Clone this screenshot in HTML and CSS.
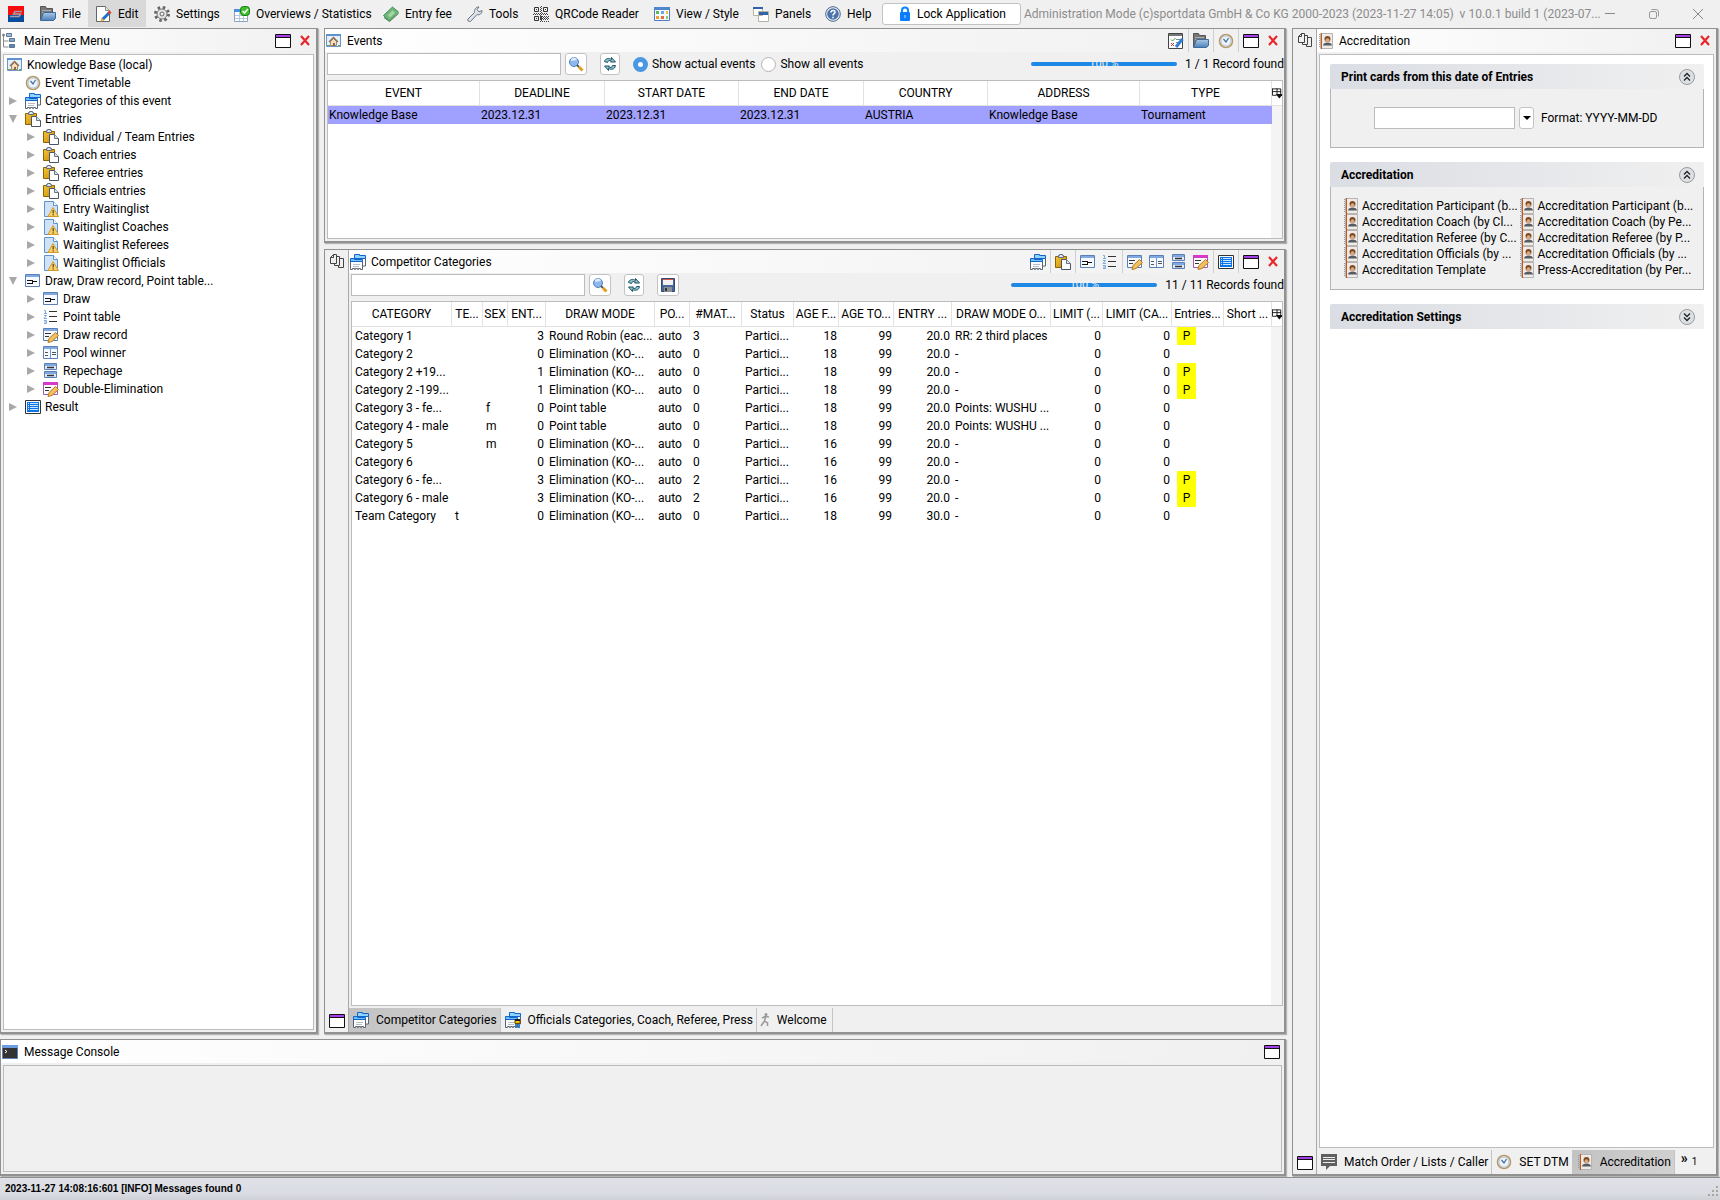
FILE: index.html
```html
<!DOCTYPE html>
<html lang="en">
<head>
    <meta charset="UTF-8">
    <meta name="viewport" content="width=device-width, initial-scale=1.0">
    <title>Administration Mode</title>
    <link rel="stylesheet" href="styles.css">
</head>
<body>
    <svg class="defs" aria-hidden="true">
        <linearGradient id="blue" x1="0" y1="0" x2="0" y2="1"><stop offset="0" stop-color="#a9c8e8"/><stop offset="1" stop-color="#4c7fb8"/></linearGradient>
        <linearGradient id="gold" x1="0" y1="0" x2="1" y2="1"><stop offset="0" stop-color="#f5c53a"/><stop offset="1" stop-color="#c98a00"/></linearGradient>
        <symbol id="i-logo" viewBox="0 0 16 16"><path fill="#f50d0d" d="M0 0h16v9H0z"/><path fill="#0a4c9c" d="M0 9h16v7H0z"/><path fill="none" stroke="#a89aa4" stroke-width="1.500" d="M14 5.500H7L5.500 8h7L11 10.500H2"/></symbol>
        <symbol id="i-folder" viewBox="0 0 16 16"><path fill="#777" stroke="#555" d="M.5 14V.5h5l1 2h6V8"/><path stroke="#aaa" d="M2 4.500h9M2 6.500h9"/><path fill="url(#blue)" stroke="#3d6a9c" d="M.5 14.500l3-8h12v6l-2 2z"/></symbol>
        <symbol id="i-edit" viewBox="0 0 16 16"><path fill="#fff" stroke="#666" d="M.5.500h9l4 4v11H.5z"/><path fill="#e8e8e8" stroke="#888" d="M9.500.500v4h4"/><path stroke="#1f6fd0" stroke-width="3" d="M6.500 13.500l7-7"/><path stroke="#e23c2e" stroke-width="3" d="M12.500 7.500l2-2"/><path fill="#f0b040" d="M4.500 15.500l1-4 3 3z"/></symbol>
        <symbol id="i-gear" viewBox="0 0 16 16"><circle cx="8" cy="8" r="6.500" fill="none" stroke="#666" stroke-width="3" stroke-dasharray="2.500 2.600"/><circle cx="8" cy="8" r="5" fill="#e4e7ea" stroke="#777"/><circle cx="8" cy="8" r="2" fill="#f0f0f0" stroke="#666"/></symbol>
        <symbol id="i-stats" viewBox="0 0 16 16"><path fill="#fff" stroke="#8aa4c4" d="M.5 3.500h13v12H.5z"/><path fill="#4a90e2" d="M0 3h9v3H0z"/><path stroke="#b4c8de" d="M1 9.500h12M1 12.500h12M5.500 6v9M9.500 6v9"/><rect x="6.500" y=".5" width="9" height="9" rx="3" fill="#3fbf2e" stroke="#157a12"/><path fill="none" stroke="#fff" stroke-width="1.500" d="M8.500 5l2 2 3.500-4"/></symbol>
        <symbol id="i-money" viewBox="0 0 16 16"><path fill="#6fb878" stroke="#4a8c55" d="M.5 9.500L9.500 1l6 5-9 9z"/><path fill="#a5d6a7" d="M5 9l4.500-4.500L12 7l-5 4.500z"/><path fill="none" stroke="#3f7d4a" d="M1 11.500l5.500 4 9-8"/></symbol>
        <symbol id="i-wrench" viewBox="0 0 16 16"><path fill="#dfe4ea" stroke="#6a7480" d="M1 13l6.500-6.500C7 3.500 9 .8 12 1l-2 2.500 2 2.500 3-1.500c.3 3-2.500 5-5 4L3.500 15.500C1.500 16 .2 14.500 1 13z"/></symbol>
        <symbol id="i-qr" viewBox="0 0 16 16"><path fill="none" stroke="#333" d="M1.500 1.500h4v4h-4zM10.500 1.500h4v4h-4zM1.500 10.500h4v4h-4z"/><path stroke="#444" stroke-dasharray="1 1" d="M7.500 1v14M8.500 0v16M1 7.500h14M0 8.500h16M7 10.500h9M8 11.500h8M7 12.500h9M8 13.500h8M7 15.500h9"/><path fill="#333" d="M3 3h1v1H3zM12 3h1v1h-1zM3 12h1v1H3z"/></symbol>
        <symbol id="i-view" viewBox="0 0 16 16"><path fill="#f6faff" stroke="#4f7fc0" d="M.5 1.500h15v13H.5z"/><path fill="#4f86cf" d="M0 1h16v3H0z"/><path fill="#5db85d" d="M2 5h3v3H2z"/><path fill="#6aa7e8" d="M7 5h3v3H7z"/><path fill="#e8c53a" d="M12 5h2v3h-2z"/><path fill="#f0a030" d="M2 10h3v3H2z"/><path fill="#e86a3a" d="M7 10h3v3H7z"/><path fill="#8cc870" d="M12 10h2v3h-2z"/></symbol>
        <symbol id="i-panels" viewBox="0 0 16 16"><path fill="#fff" stroke="#b4b4a4" d="M.5 1.500h9v8h-9zM5.500 5.500h10v10h-10z"/><path fill="#2f62a6" d="M0 1h10v2H0zM6 6h9v3H6z"/></symbol>
        <symbol id="i-help" viewBox="0 0 16 16"><circle cx="8" cy="8" r="7.300" fill="#eef3f8" stroke="#4a6384"/><circle cx="8" cy="8" r="5.800" fill="#4b74ab"/><path fill="none" stroke="#fff" stroke-width="1.600" d="M6 6.500C6 3.500 10.500 4 10 6.500 9.800 7.800 8 7.800 8 9.500M8 10.800v1.400"/></symbol>
        <symbol id="i-lock" viewBox="0 0 16 16"><path fill="none" stroke="#0a84ff" stroke-width="2" d="M5 7V4.500a3 3 0 0 1 6 0V7"/><rect x="3" y="6" width="10" height="9" rx="1" fill="#0a7cff"/><path stroke="#7fc0ff" stroke-width="1.500" d="M8 9v3"/></symbol>
        <symbol id="i-tree" viewBox="0 0 16 16"><path fill="none" stroke="#888" d="M1.500 2v12h5M1.500 8h5M4.500 2.500h3"/><circle cx="1.500" cy="2" r="1.500" fill="#888"/><path fill="url(#blue)" stroke="#5c7894" d="M4.500.500h5v3h-5zM7.500 5.500h5v3h-5zM7.500 11.500h5v3h-5z"/></symbol>
        <symbol id="i-home" viewBox="0 0 16 16"><path fill="#e6f0fa" stroke="#6a96c4" d="M.5 1.500h14v12H.5z"/><path fill="#5f93cf" d="M0 1h15v2H0z"/><path fill="#f1dfc0" stroke="#a58a6a" d="M4.500 8.500v4h6v-4l-3-3z"/><path fill="none" stroke="#8f6a50" stroke-width="1.300" d="M3 9l4.500-4.500L12 9"/><path fill="#8a6a4a" d="M7 10h2v3H7z"/><path stroke="#6aa84f" d="M1 12.500h3M12 12.500h2"/></symbol>
        <symbol id="i-clock" viewBox="0 0 16 16"><circle cx="8" cy="8" r="6.500" fill="#eef4fb" stroke="#b89a68" stroke-width="1.600"/><circle cx="8" cy="8" r="5" fill="none" stroke="#b5c6da"/><path fill="none" stroke="#4a6fa0" stroke-width="1.300" d="M5.500 6L8 9l2.500-4"/></symbol>
        <symbol id="i-cats" viewBox="0 0 16 16"><path fill="#fff" stroke="#5c6470" d="M4.500 4v8h11V4z"/><path fill="#8fd4ff" stroke="#1565c8" d="M4.500 4.500v-4h5v1h6v3z"/><path fill="#fbfcfd" stroke="#5c6470" d="M.5 7v8.500h2v-1h2v1h1v-1h2v1h1v-1h2v1h2V7z"/><path fill="#6cc2ff" stroke="#1565c8" d="M.5 7.500v-3h4v1h8v2z"/><path stroke="#b8bcc4" d="M3 10.500h7M3 12.500h6"/></symbol>
        <symbol id="i-official" viewBox="0 0 16 16"><use href="#i-cats"/><path fill="#f5c400" stroke="#6a4a00" d="M10 7.500h5v4h-5z"/><path fill="#222" d="M10 7h5v2h-5z"/><path fill="#2f7fd0" d="M10 12h2v4h-2zM13 12h2v4h-2z"/></symbol>
        <symbol id="i-paste" viewBox="0 0 16 16"><path fill="url(#gold)" stroke="#8a6400" d="M.5 2.500h11v11H.5z"/><path fill="#dfe6ee" stroke="#5c6c80" d="M3.500 3.500v-2h1v-1h3v1h1v2z"/><path fill="#fff" stroke="#4a5464" d="M6.500 5.500h5l4 4v6h-9z"/><path fill="#d8e0ea" stroke="#6a7484" d="M11.500 5.500v4h4"/></symbol>
        <symbol id="i-wait" viewBox="0 0 16 16"><path fill="#cfe2f6" stroke="#5d94cc" d="M1.500.500h9l4 4v11h-13z"/><path fill="#fff" stroke="#5d94cc" d="M10.500.500v4h4"/><path fill="#f7d269" stroke="#d29a2a" d="M5 15.500L10 6.500l5.500 9z"/><path stroke="#6a4a10" stroke-width="1.300" d="M10.200 9v3.500M10.200 13.300v1.200"/></symbol>
        <symbol id="i-draw" viewBox="0 0 16 16"><path fill="#f6faff" stroke="#5b80b8" d="M.5 1.500h14v12H.5z"/><path fill="#7fa9e0" d="M1 2h13v2H1z"/><path fill="none" stroke="#111" d="M2 7.500h5M2 10.500h5M8 8.500h4M7.500 7v4"/></symbol>
        <symbol id="i-points" viewBox="0 0 16 16"><path stroke="#333" d="M6 2.500h8M6 7.500h8M6 12.500h8"/><path fill="none" stroke="#7eaadf" d="M1 1.500h1.500V4M1 4.500h3M1 6.500h2.500L1 9.500h3M1 11.500h2.500v3H1M1 13h2"/></symbol>
        <symbol id="i-record" viewBox="0 0 16 16"><path fill="#f6faff" stroke="#5b80b8" d="M.5 1.500h14v12H.5z"/><path fill="#7fa9e0" d="M1 2h13v2H1z"/><path stroke="#333" d="M2 6.500h6M2 9.500h4"/><path fill="#f2c060" stroke="#b47a20" d="M5 15.500l1-4 6.500-6 3 3-6.500 6z"/></symbol>
        <symbol id="i-pool" viewBox="0 0 16 16"><path fill="#f6faff" stroke="#5b80b8" d="M.5 1.500h14v12H.5z"/><path fill="#7fa9e0" d="M1 2h13v2H1z"/><path stroke="#6b98d8" d="M7.500 4v9"/><path stroke="#555" d="M2 7.500h3M2 10.500h3M9 7.500h4M9 9.500h4"/></symbol>
        <symbol id="i-repechage" viewBox="0 0 16 16"><path fill="#dce9f8" stroke="#5b80b8" d="M1.500.500h12v6h-12zM1.500 8.500h12v6h-12z"/><path fill="#7fa9e0" d="M2 1h11v2H2zM2 9h11v2H2z"/><path stroke="#333" stroke-width="1.500" d="M4 4.500h7M4 12.500h7"/></symbol>
        <symbol id="i-double" viewBox="0 0 16 16"><path fill="#fff" stroke="#a05ab4" d="M.5 1.500h14v12H.5z"/><path fill="#d63ac8" d="M0 1h15v3H0z"/><path stroke="#333" d="M2 6.500h6M2 9.500h4"/><path fill="#f2c060" stroke="#b47a20" d="M5 15.500l1-4 6.500-6 3 3-6.500 6z"/></symbol>
        <symbol id="i-result" viewBox="0 0 16 16"><path fill="#fff" stroke="#333" d="M.5 1.500h15v13H.5z"/><path fill="#0a74e8" d="M2 3h12v10H2z"/><path stroke="#cfe6ff" d="M5 4.500h8M5 6.500h8M5 8.500h8M5 10.500h8"/><path stroke="#cfe6ff" stroke-dasharray="1 1" d="M3.500 4v8"/></symbol>
        <symbol id="i-window" viewBox="0 0 16 16"><path fill="#fff" stroke="#111" d="M.5 1.500h15v13H.5z"/><path fill="#a540e8" d="M1 2h14v2H1z"/><path stroke="#111" d="M1 4.500h14"/></symbol>
        <symbol id="i-close" viewBox="0 0 16 16"><path stroke="#e8272b" stroke-width="2.200" d="M4 3l8 9M12 3l-8 9"/></symbol>
        <symbol id="i-search" viewBox="0 0 16 16"><circle cx="6" cy="6" r="4.500" fill="#8cb8ee" stroke="#5580c0"/><path fill="#dcebfc" d="M3 5a3 3 0 0 1 6-1z"/><path stroke="#555" stroke-width="2" d="M9 9l2 2"/><path stroke="#e0a020" stroke-width="3" d="M11 11l3.500 3.500"/></symbol>
        <symbol id="i-refresh" viewBox="0 0 16 16"><path fill="#8fc4cc" stroke="#1f5468" d="M2.500 5.500C3 2.500 7 1.500 9.500 3.500V1.500l4 4.500H8.500l1-1C8 4 5.500 4.500 5.500 6.500z"/><path fill="#8fc4cc" stroke="#1f5468" d="M13.500 9.500c-.5 4-4.500 4.500-7 3v2l-4-4.500h5l-1 1c1.500 1 4 .5 4-1.500z"/></symbol>
        <symbol id="i-save" viewBox="0 0 16 16"><path fill="#46669c" stroke="#34496e" d="M1.500 1.500h13v13h-13z"/><path fill="#f5f0f0" d="M3 2h10v6H3z"/><path fill="#d9534f" d="M3 2h10v1H3z"/><path fill="#8a8f98" d="M4 10h8v5H4z"/><path fill="#333" d="M5 11h2v3H5z"/></symbol>
        <symbol id="i-form" viewBox="0 0 16 16"><path fill="#fff" stroke="#444" d="M.5.500h14v15H.5z"/><path fill="#777" d="M1 1h13v2H1z"/><path fill="none" stroke="#3a9a4a" d="M3 6.500l1.500 1.500 3-3"/><path stroke="#c33" d="M3 10l3 3M6 10l-3 3"/><path stroke="#888" d="M8 6.500h5M8 9.500h3"/><path stroke="#2f7fd8" stroke-width="3" d="M8 14l6.500-8"/></symbol>
        <symbol id="i-card" viewBox="0 0 16 16"><path fill="#f0ebe6" stroke="#b4b4b4" d="M2.500.500h12v15h-12z"/><path stroke="#c8581c" d="M3.500 0v16"/><path stroke="#999" stroke-dasharray="1 1" d="M1.500 1v14"/><path fill="#555c66" d="M5 12.500c0-4 9-4 9 0z"/><circle cx="9.500" cy="6" r="3" fill="#7a4a20"/><circle cx="9.500" cy="7.200" r="2" fill="#d9a880"/></symbol>
        <symbol id="i-stack" viewBox="0 0 16 16"><path fill="none" stroke="#444" d="M4.500 1.500h3v9h-6v-6zM4.500 1.500v3h-3M8 3.500h2.500v9h-5V11M11 5.500h3.500v9h-5V13"/></symbol>
        <symbol id="i-column" viewBox="0 0 12 12"><path fill="none" stroke="#111" d="M.5 1.500h9v6M.5 1v7.500H5M0 4.500h10M5.500 1v7"/><path fill="#111" d="M4 7h8l-4 5z"/></symbol>
        <symbol id="i-runner" viewBox="0 0 16 16"><circle cx="8" cy="2.500" r="1.500" fill="#999"/><path fill="none" stroke="#999" stroke-width="1.500" d="M11 5L7 4.500 4 6M7.500 5L6.500 9l3 2v3M6.500 9L3 14"/></symbol>
        <symbol id="i-console" viewBox="0 0 16 16"><path fill="#333" stroke="#5d7fb4" d="M.5 1.500h15v13H.5z"/><path fill="#6d9be0" d="M0 1h16v3H0z"/><path fill="none" stroke="#fff" d="M3 6l2 1.500L3 9"/></symbol>
        <symbol id="i-chat" viewBox="0 0 16 16"><path fill="#606060" d="M0 0h16v12H9l-4 4v-4H0z"/><path stroke="#eee" d="M2 3.500h12M2 5.500h12M2 8.500h12"/></symbol>
        <symbol id="i-up" viewBox="0 0 16 16"><circle cx="8" cy="8" r="7.500" fill="#dcdfe4" stroke="#9a9a9a"/><path fill="none" stroke="#222" stroke-width="1.300" d="M5 7.500l3-3 3 3M5 11.500l3-3 3 3"/></symbol>
        <symbol id="i-down" viewBox="0 0 16 16"><circle cx="8" cy="8" r="7.500" fill="#dcdfe4" stroke="#9a9a9a"/><path fill="none" stroke="#222" stroke-width="1.300" d="M5 4.500l3 3 3-3M5 8.500l3 3 3-3"/></symbol>
        <symbol id="i-min" viewBox="0 0 16 16"><path stroke="#888" d="M3 7.500h10"/></symbol>
        <symbol id="i-restore" viewBox="0 0 16 16"><rect x="3.500" y="5.500" width="7" height="7" rx="1.500" fill="none" stroke="#999"/><path fill="none" stroke="#999" d="M5.500 3.500H10a2.500 2.500 0 0 1 2.500 2.500v4.500"/></symbol>
        <symbol id="i-exit" viewBox="0 0 16 16"><path stroke="#888" d="M3 3l10 10M13 3L3 13"/></symbol>
    </svg>

    <header class="menubar">
        <svg class="icon logo"><use href="#i-logo"/></svg>
        <nav class="menu">
            <button><svg class="icon"><use href="#i-folder"/></svg>File</button>
            <button class="active"><svg class="icon"><use href="#i-edit"/></svg>Edit</button>
            <button><svg class="icon"><use href="#i-gear"/></svg>Settings</button>
            <button><svg class="icon"><use href="#i-stats"/></svg>Overviews / Statistics</button>
            <button><svg class="icon"><use href="#i-money"/></svg>Entry fee</button>
            <button><svg class="icon"><use href="#i-wrench"/></svg>Tools</button>
            <button><svg class="icon"><use href="#i-qr"/></svg>QRCode Reader</button>
            <button><svg class="icon"><use href="#i-view"/></svg>View / Style</button>
            <button><svg class="icon"><use href="#i-panels"/></svg>Panels</button>
            <button><svg class="icon"><use href="#i-help"/></svg>Help</button>
        </nav>
        <button class="lock"><svg class="icon"><use href="#i-lock"/></svg>Lock Application</button>
        <span class="app-title">Administration Mode (c)sportdata GmbH &amp; Co KG 2000-2023 (2023-11-27 14:05)&nbsp; v 10.0.1 build 1 (2023-07...</span>
        <div class="window-buttons">
            <button aria-label="Minimize"><svg class="icon"><use href="#i-min"/></svg></button>
            <button aria-label="Restore"><svg class="icon"><use href="#i-restore"/></svg></button>
            <button aria-label="Close"><svg class="icon"><use href="#i-exit"/></svg></button>
        </div>
    </header>

    <main class="workspace">
        <div class="left-area">
            <div class="top-area">
                <section class="panel tree-panel">
                    <div class="panel-header">
                        <svg class="icon"><use href="#i-tree"/></svg>
                        <h2>Main Tree Menu</h2>
                        <button class="tool" aria-label="Maximize"><svg class="icon"><use href="#i-window"/></svg></button>
                        <button class="tool close" aria-label="Close"><svg class="icon"><use href="#i-close"/></svg></button>
                    </div>
                    <div class="box tree">
                        <a href="#" class="root"><svg class="icon"><use href="#i-home"/></svg>Knowledge Base (local)</a>
                        <ul>
                            <li><span class="twisty"></span><a href="#"><svg class="icon"><use href="#i-clock"/></svg>Event Timetable</a></li>
                            <li><button class="twisty closed" aria-label="Expand"></button><a href="#"><svg class="icon"><use href="#i-cats"/></svg>Categories of this event</a></li>
                            <li><button class="twisty open" aria-label="Collapse"></button><a href="#"><svg class="icon"><use href="#i-paste"/></svg>Entries</a>
                                <ul>
                                    <li><button class="twisty closed" aria-label="Expand"></button><a href="#"><svg class="icon"><use href="#i-paste"/></svg>Individual / Team Entries</a></li>
                                    <li><button class="twisty closed" aria-label="Expand"></button><a href="#"><svg class="icon"><use href="#i-paste"/></svg>Coach entries</a></li>
                                    <li><button class="twisty closed" aria-label="Expand"></button><a href="#"><svg class="icon"><use href="#i-paste"/></svg>Referee entries</a></li>
                                    <li><button class="twisty closed" aria-label="Expand"></button><a href="#"><svg class="icon"><use href="#i-paste"/></svg>Officials entries</a></li>
                                    <li><button class="twisty closed" aria-label="Expand"></button><a href="#"><svg class="icon"><use href="#i-wait"/></svg>Entry Waitinglist</a></li>
                                    <li><button class="twisty closed" aria-label="Expand"></button><a href="#"><svg class="icon"><use href="#i-wait"/></svg>Waitinglist Coaches</a></li>
                                    <li><button class="twisty closed" aria-label="Expand"></button><a href="#"><svg class="icon"><use href="#i-wait"/></svg>Waitinglist Referees</a></li>
                                    <li><button class="twisty closed" aria-label="Expand"></button><a href="#"><svg class="icon"><use href="#i-wait"/></svg>Waitinglist Officials</a></li>
                                </ul>
                            </li>
                            <li><button class="twisty open" aria-label="Collapse"></button><a href="#"><svg class="icon"><use href="#i-draw"/></svg>Draw, Draw record, Point table...</a>
                                <ul>
                                    <li><button class="twisty closed" aria-label="Expand"></button><a href="#"><svg class="icon"><use href="#i-draw"/></svg>Draw</a></li>
                                    <li><button class="twisty closed" aria-label="Expand"></button><a href="#"><svg class="icon"><use href="#i-points"/></svg>Point table</a></li>
                                    <li><button class="twisty closed" aria-label="Expand"></button><a href="#"><svg class="icon"><use href="#i-record"/></svg>Draw record</a></li>
                                    <li><button class="twisty closed" aria-label="Expand"></button><a href="#"><svg class="icon"><use href="#i-pool"/></svg>Pool winner</a></li>
                                    <li><button class="twisty closed" aria-label="Expand"></button><a href="#"><svg class="icon"><use href="#i-repechage"/></svg>Repechage</a></li>
                                    <li><button class="twisty closed" aria-label="Expand"></button><a href="#"><svg class="icon"><use href="#i-double"/></svg>Double-Elimination</a></li>
                                </ul>
                            </li>
                            <li><button class="twisty closed" aria-label="Expand"></button><a href="#"><svg class="icon"><use href="#i-result"/></svg>Result</a></li>
                        </ul>
                    </div>
                </section>

                <div class="center-area">
                    <section class="panel events-panel">
                        <div class="panel-header">
                            <svg class="icon"><use href="#i-home"/></svg>
                            <h2>Events</h2>
                            <div class="tool-group"><button class="tool" aria-label="Edit event"><svg class="icon"><use href="#i-form"/></svg></button></div>
                            <div class="tool-group"><button class="tool" aria-label="Open"><svg class="icon"><use href="#i-folder"/></svg></button></div>
                            <div class="tool-group"><button class="tool" aria-label="Timetable"><svg class="icon"><use href="#i-clock"/></svg></button></div>
                            <button class="tool" aria-label="Maximize"><svg class="icon"><use href="#i-window"/></svg></button>
                            <button class="tool close" aria-label="Close"><svg class="icon"><use href="#i-close"/></svg></button>
                        </div>
                        <div class="filter">
                            <input type="text" aria-label="Search events">
                            <button class="small-button" aria-label="Search"><svg class="icon"><use href="#i-search"/></svg></button>
                            <button class="small-button refresh" aria-label="Refresh"><svg class="icon"><use href="#i-refresh"/></svg></button>
                            <label class="radio"><input type="radio" name="show" checked>Show actual events</label>
                            <label class="radio"><input type="radio" name="show">Show all events</label>
                            <div class="bar">100 %</div>
                            <span class="found">1 / 1 Record found</span>
                        </div>
                        <div class="box table-box">
                            <table class="events">
                                <colgroup>
                                    <col style="width:152px"><col style="width:125px"><col style="width:134px"><col style="width:125px"><col style="width:124px"><col style="width:152px"><col style="width:132px"><col style="width:11px">
                                </colgroup>
                                <thead>
                                    <tr><th>EVENT</th><th>DEADLINE</th><th>START DATE</th><th>END DATE</th><th>COUNTRY</th><th>ADDRESS</th><th>TYPE</th><th class="control"><svg><use href="#i-column"/></svg></th></tr>
                                </thead>
                                <tbody>
                                    <tr class="selected"><td>Knowledge Base</td><td>2023.12.31</td><td>2023.12.31</td><td>2023.12.31</td><td>AUSTRIA</td><td>Knowledge Base</td><td>Tournament</td><td class="control"></td></tr>
                                </tbody>
                            </table>
                        </div>
                    </section>

                    <section class="panel split categories-panel">
                        <div class="stub">
                            <button aria-label="Tabs"><svg class="icon"><use href="#i-stack"/></svg></button>
                            <button aria-label="Window"><svg class="icon"><use href="#i-window"/></svg></button>
                        </div>
                        <div class="content">
                            <div class="panel-header">
                                <svg class="icon"><use href="#i-cats"/></svg>
                                <h2>Competitor Categories</h2>
                                <div class="tool-group"><button class="tool" aria-label="Categories"><svg class="icon"><use href="#i-cats"/></svg></button></div>
                                <div class="tool-group"><button class="tool" aria-label="Entries"><svg class="icon"><use href="#i-paste"/></svg></button></div>
                                <div class="tool-group tight">
                                    <button class="tool" aria-label="Draw"><svg class="icon"><use href="#i-draw"/></svg></button>
                                    <button class="tool" aria-label="Point table"><svg class="icon"><use href="#i-points"/></svg></button>
                                </div>
                                <div class="tool-group tight">
                                    <button class="tool" aria-label="Draw record"><svg class="icon"><use href="#i-record"/></svg></button>
                                    <button class="tool" aria-label="Pool winner"><svg class="icon"><use href="#i-pool"/></svg></button>
                                    <button class="tool" aria-label="Repechage"><svg class="icon"><use href="#i-repechage"/></svg></button>
                                    <button class="tool" aria-label="Double-Elimination"><svg class="icon"><use href="#i-double"/></svg></button>
                                </div>
                                <div class="tool-group"><button class="tool" aria-label="Result"><svg class="icon"><use href="#i-result"/></svg></button></div>
                                <button class="tool" aria-label="Maximize"><svg class="icon"><use href="#i-window"/></svg></button>
                                <button class="tool close" aria-label="Close"><svg class="icon"><use href="#i-close"/></svg></button>
                            </div>
                            <div class="filter">
                                <input type="text" aria-label="Search categories">
                                <button class="small-button" aria-label="Search"><svg class="icon"><use href="#i-search"/></svg></button>
                                <button class="small-button refresh" aria-label="Refresh"><svg class="icon"><use href="#i-refresh"/></svg></button>
                                <button class="small-button save" aria-label="Save"><svg class="icon"><use href="#i-save"/></svg></button>
                                <div class="bar">100 %</div>
                                <span class="found">11 / 11 Records found</span>
                            </div>
                            <div class="box table-box">
                                <table class="categories">
                                    <colgroup id="cols"></colgroup>
                                    <thead>
                                        <tr><th>CATEGORY</th><th>TE...</th><th>SEX</th><th>ENT...</th><th>DRAW MODE</th><th>PO...</th><th>#MAT...</th><th>Status</th><th>AGE F...</th><th>AGE TO...</th><th>ENTRY ...</th><th>DRAW MODE O...</th><th>LIMIT (...</th><th>LIMIT (CA...</th><th>Entries...</th><th>Short ...</th><th class="control"><svg><use href="#i-column"/></svg></th></tr>
                                    </thead>
                                    <tbody id="rows"></tbody>
                                </table>
                            </div>
                            <div class="tabs">
                                <button class="tab active"><svg class="icon"><use href="#i-cats"/></svg>Competitor Categories</button>
                                <button class="tab"><svg class="icon"><use href="#i-official"/></svg>Officials Categories, Coach, Referee, Press</button>
                                <button class="tab last"><svg class="icon"><use href="#i-runner"/></svg>Welcome</button>
                            </div>
                        </div>
                    </section>
                </div>
            </div>

            <section class="panel console-panel">
                <div class="panel-header">
                    <svg class="icon"><use href="#i-console"/></svg>
                    <h2>Message Console</h2>
                    <button class="tool" aria-label="Maximize"><svg class="icon"><use href="#i-window"/></svg></button>
                </div>
                <div class="box console"></div>
            </section>
        </div>

        <section class="panel split right-panel">
            <div class="stub">
                <button aria-label="Tabs"><svg class="icon"><use href="#i-stack"/></svg></button>
                <button aria-label="Window"><svg class="icon"><use href="#i-window"/></svg></button>
            </div>
            <div class="content">
                <div class="panel-header">
                    <svg class="icon"><use href="#i-card"/></svg>
                    <h2>Accreditation</h2>
                    <button class="tool" aria-label="Maximize"><svg class="icon"><use href="#i-window"/></svg></button>
                    <button class="tool close" aria-label="Close"><svg class="icon"><use href="#i-close"/></svg></button>
                </div>
                <div class="box groups">
                    <div class="group">
                        <div class="group-header"><h3>Print cards from this date of Entries</h3><button aria-label="Collapse"><svg class="icon"><use href="#i-up"/></svg></button></div>
                        <div class="group-body date-row">
                            <input type="text" id="date">
                            <button class="drop" aria-label="Pick date"></button>
                            <label for="date">Format: YYYY-MM-DD</label>
                        </div>
                    </div>
                    <div class="group">
                        <div class="group-header"><h3>Accreditation</h3><button aria-label="Collapse"><svg class="icon"><use href="#i-up"/></svg></button></div>
                        <div class="group-body cards">
                            <a href="#"><svg class="icon"><use href="#i-card"/></svg>Accreditation Participant (b...</a>
                            <a href="#"><svg class="icon"><use href="#i-card"/></svg>Accreditation Participant (b...</a>
                            <a href="#"><svg class="icon"><use href="#i-card"/></svg>Accreditation Coach (by Cl...</a>
                            <a href="#"><svg class="icon"><use href="#i-card"/></svg>Accreditation Coach (by Pe...</a>
                            <a href="#"><svg class="icon"><use href="#i-card"/></svg>Accreditation Referee (by C...</a>
                            <a href="#"><svg class="icon"><use href="#i-card"/></svg>Accreditation Referee (by P...</a>
                            <a href="#"><svg class="icon"><use href="#i-card"/></svg>Accreditation Officials (by ...</a>
                            <a href="#"><svg class="icon"><use href="#i-card"/></svg>Accreditation Officials (by ...</a>
                            <a href="#"><svg class="icon"><use href="#i-card"/></svg>Accreditation Template</a>
                            <a href="#"><svg class="icon"><use href="#i-card"/></svg>Press-Accreditation (by Per...</a>
                        </div>
                    </div>
                    <div class="group">
                        <div class="group-header"><h3>Accreditation Settings</h3><button aria-label="Expand"><svg class="icon"><use href="#i-down"/></svg></button></div>
                    </div>
                </div>
                <div class="tabs">
                    <button class="tab"><svg class="icon"><use href="#i-chat"/></svg>Match Order / Lists / Caller</button>
                    <button class="tab"><svg class="icon"><use href="#i-clock"/></svg>SET DTM</button>
                    <button class="tab active"><svg class="icon"><use href="#i-card"/></svg>Accreditation</button>
                    <button class="more"><b>»</b><sub>1</sub></button>
                </div>
            </div>
        </section>
    </main>

    <footer class="statusbar">
        <span>2023-11-27 14:08:16:601 [INFO] Messages found 0</span>
        <svg class="grip" viewBox="0 0 12 12"><path fill="#aaa69c" d="M8 0h2v2H8zM4 4h2v2H4zM8 4h2v2H8zM0 8h2v2H0zM4 8h2v2H4zM8 8h2v2H8z"/></svg>
    </footer>

    <script>
        const widths = [100, 31, 25, 38, 109, 35, 52, 52, 45, 55, 58, 99, 52, 69, 52, 48, 11];
        const numeric = [3, 8, 9, 10, 12, 13];
        const ko = 'Elimination (KO-...';

        // category, team, sex, entries, draw mode, matches, age from, entry fee, draw option, marked
        const categories = [
            ['Category 1', '', '', 3, 'Round Robin (eac...', 3, 18, '20.0', 'RR: 2 third places', true],
            ['Category 2', '', '', 0, ko, 0, 18, '20.0', '-', false],
            ['Category 2 +19...', '', '', 1, ko, 0, 18, '20.0', '-', true],
            ['Category 2 -199...', '', '', 1, ko, 0, 18, '20.0', '-', true],
            ['Category 3 - fe...', '', 'f', 0, 'Point table', 0, 18, '20.0', 'Points: WUSHU ...', false],
            ['Category 4 - male', '', 'm', 0, 'Point table', 0, 18, '20.0', 'Points: WUSHU ...', false],
            ['Category 5', '', 'm', 0, ko, 0, 16, '20.0', '-', false],
            ['Category 6', '', '', 0, ko, 0, 16, '20.0', '-', false],
            ['Category 6 - fe...', '', '', 3, ko, 2, 16, '20.0', '-', true],
            ['Category 6 - male', '', '', 3, ko, 2, 16, '20.0', '-', true],
            ['Team Category', 't', '', 0, ko, 0, 18, '30.0', '-', false]
        ];

        const cols = document.getElementById('cols');
        widths.forEach(w => {
            const col = document.createElement('col');
            col.style.width = w + 'px';
            cols.appendChild(col);
        });

        const rows = document.getElementById('rows');
        categories.forEach(([name, team, sex, entries, mode, matches, age, fee, option, marked]) => {
            const tr = document.createElement('tr');
            const values = [name, team, sex, entries, mode, 'auto', matches, 'Partici...', age, 99, fee, option, 0, 0, '', '', ''];
            values.forEach((value, index) => {
                const td = document.createElement('td');
                td.textContent = value;
                if (numeric.includes(index)) td.classList.add('num');
                if (index === 14 && marked) td.innerHTML = '<span class="mark">P</span>';
                if (index === 16) td.classList.add('control');
                tr.appendChild(td);
            });
            rows.appendChild(tr);
        });
    </script>
</body>
</html>
```
FILE: styles.css
```css
* {
    box-sizing: border-box;
}
body {
    font-family: Roboto, "Liberation Sans", sans-serif;
    font-size: 12px;
    line-height: 16px;
    margin: 0;
    height: 100vh;
    display: flex;
    flex-direction: column;
    background-color: #f0f0f0;
    color: #000;
    white-space: nowrap;
}
button, input {
    font: inherit;
    color: inherit;
    margin: 0;
    padding: 0;
}
button {
    display: flex;
    align-items: center;
    border: none;
    background: none;
    white-space: nowrap;
}
a {
    color: inherit;
    text-decoration: none;
}
h2, h3 {
    margin: 0;
    font-size: 12px;
    font-weight: normal;
}
.defs {
    position: absolute;
    width: 0;
    height: 0;
}
.icon {
    width: 16px;
    height: 16px;
    flex: none;
}

/* menu bar */
.menubar {
    display: flex;
    align-items: center;
    height: 27px;
    flex: none;
}
.logo {
    margin: 0 8px;
}
.menu {
    display: grid;
    grid-template-columns: 56px 58px 80px 149px 84px 66px 121px 99px 72px 65px;
    height: 27px;
}
.menu button {
    padding-left: 8px;
    gap: 6px;
}
.menu .active {
    background-color: #d9d9d9;
}
.lock {
    width: 139px;
    height: 22px;
    justify-content: center;
    gap: 4px;
    border: 1px solid #c3c3c3;
    border-radius: 3px;
    background-color: #fff;
}
.app-title {
    flex: 1;
    padding-left: 3px;
    color: #8c8c8c;
    overflow: hidden;
}
.window-buttons {
    display: flex;
    gap: 28px;
    padding-right: 14px;
}

/* panels */
.workspace {
    flex: 1;
    min-height: 0;
    display: flex;
    gap: 6px;
    padding: 1px 2px 1px 0;
}
.left-area {
    flex: 1;
    min-width: 0;
    display: flex;
    flex-direction: column;
    gap: 5px;
}
.top-area {
    flex: 1;
    min-height: 0;
    display: flex;
    gap: 6px;
}
.center-area {
    flex: 1;
    min-width: 0;
    display: flex;
    flex-direction: column;
    gap: 6px;
}
.panel {
    display: flex;
    flex-direction: column;
    border: 1px solid #919191;
    border-right-width: 2px;
    border-bottom-width: 2px;
    box-shadow: 1px 1px 1px #b4b4b4;
}
.tree-panel {
    width: 318px;
    flex: none;
}
.events-panel {
    height: 215px;
    flex: none;
}
.categories-panel {
    flex: 1;
    min-height: 0;
}
.console-panel {
    height: 137px;
    flex: none;
}
.right-panel {
    width: 426px;
    flex: none;
}
.split {
    flex-direction: row;
}
.stub {
    width: 24px;
    flex: none;
    display: flex;
    flex-direction: column;
    justify-content: space-between;
    align-items: center;
    padding: 3px 0;
    border-right: 1px solid #a8a8a8;
}
.content {
    flex: 1;
    min-width: 0;
    display: flex;
    flex-direction: column;
}
.panel-header {
    display: flex;
    align-items: center;
    height: 23px;
    flex: none;
    padding: 0 2px 0 1px;
    background: linear-gradient(to right, #fff, #f0f0f0);
}
.panel-header h2 {
    flex: 1;
    padding-left: 5px;
}
.tree-panel h2, .console-panel h2 {
    padding-left: 6px;
}
.console-panel .panel-header {
    padding-right: 0;
}
.tool {
    width: 24px;
    height: 23px;
    justify-content: center;
}
.close {
    width: 19px;
}
.tool-group {
    display: flex;
    border-right: 1px solid #cfcfcf;
}
.tight {
    padding: 0 1px;
}
.tight .tool {
    width: 22px;
}
.box {
    flex: 1;
    min-height: 0;
    margin: 2px;
    border: 1px solid #bcbcbc;
    background-color: #fff;
}
.console {
    background-color: #f0f0f0;
}

/* tree */
.tree {
    padding-top: 1px;
}
.tree ul {
    list-style: none;
    margin: 0;
    padding: 0;
}
.tree ul ul {
    padding-left: 18px;
}
.tree li {
    display: flex;
    flex-wrap: wrap;
    align-items: center;
}
.tree li ul {
    width: 100%;
}
.tree a {
    display: flex;
    align-items: center;
    gap: 4px;
    height: 18px;
}
.tree .root {
    padding-left: 3px;
}
.twisty {
    width: 21px;
    height: 18px;
    padding-left: 5px;
}
.twisty::before {
    content: "";
    border: 4px solid transparent;
}
.closed::before {
    border-left: 8px solid #a8a8a8;
    border-right: 0;
}
.open::before {
    border-top: 8px solid #a8a8a8;
    border-bottom: 0;
}

/* filter row */
.filter {
    display: flex;
    align-items: center;
    height: 26px;
    flex: none;
    padding: 1px 0 3px 2px;
}
.filter input[type="text"], .date-row input {
    height: 22px;
    border: 1px solid #bcbcbc;
    background-color: #fff;
}
.filter input[type="text"] {
    width: 234px;
}
.small-button {
    width: 22px;
    height: 22px;
    margin-left: 4px;
    justify-content: center;
    border: 1px solid #c3c3c3;
    border-radius: 3px;
    background-color: #fff;
}
.refresh {
    width: 20px;
    margin: 0 13px;
}
.save {
    margin-left: 0;
}
.radio {
    display: flex;
    align-items: center;
    gap: 4px;
    margin-right: 6px;
}
.radio input {
    appearance: none;
    width: 15px;
    height: 15px;
    border: 1px solid #b4b4b4;
    border-radius: 50%;
    background-color: #fff;
}
.radio input:checked {
    border: 5px solid #4a98e4;
}
/* the label is taller than the bar and only shows where it crosses it */
.bar {
    width: 146px;
    height: 4px;
    margin: 0 8px 0 auto;
    border-radius: 2px;
    background-color: #1e88e5;
    color: #f0f0f0;
    font-size: 11px;
    line-height: 4px;
    text-align: center;
}

/* tables */
.table-box {
    margin-right: 1px;
    overflow: hidden;
    background: linear-gradient(#f4f4f4, #f4f4f4) right / 11px 100% no-repeat #fff;
}
table {
    width: 100%;
    table-layout: fixed;
    border-collapse: separate;
    border-spacing: 0;
}
th {
    height: 25px;
    padding: 0;
    border-right: 1px solid #e2e2e2;
    border-bottom: 1px solid #e2e2e2;
    background-color: #fff;
    font-weight: normal;
    overflow: hidden;
}
td {
    height: 18px;
    padding: 0 0 0 1px;
    line-height: 18px;
    overflow: hidden;
}
th.control {
    border-right: none;
}
.control svg {
    display: block;
    width: 11px;
    height: 12px;
}
.selected td {
    background-color: #a0a0ff;
}
td.control, .selected td.control {
    background-color: #f4f4f4;
}
.categories td {
    padding-left: 3px;
}
.categories .num {
    padding: 0 2px 0 0;
    text-align: right;
}
.mark {
    display: block;
    width: 19px;
    margin-left: 2px;
    background-color: #ff0;
    text-align: center;
}

/* bottom tabs */
.tabs {
    display: flex;
    height: 24px;
    flex: none;
}
.tab {
    gap: 7px;
    padding: 0 3px 0 4px;
    border-right: 1px solid #c4c4c4;
}
.tab.active {
    background: linear-gradient(135deg, #c2c2c2, #d2d2d2);
}
.tab.last {
    gap: 3px;
    padding: 0 5px 0 1px;
}
.more {
    padding-left: 6px;
}
.more b {
    font-size: 14px;
    margin-bottom: 8px;
}
.more sub {
    font-size: 10px;
    margin-left: 4px;
}

/* accreditation */
.groups {
    display: flex;
    flex-direction: column;
    gap: 14px;
    padding: 9px 9px 9px 10px;
}
.group-header {
    display: flex;
    align-items: center;
    justify-content: space-between;
    height: 25px;
    padding: 0 9px 0 11px;
    border-radius: 2px 2px 0 0;
    background: linear-gradient(to right, #dadde3, #f0f0f0);
}
.group-header h3 {
    font-weight: bold;
}
.group-body {
    border: 1px solid #b4b4b4;
    border-top: none;
    background-color: #f0f0f0;
}
.date-row {
    display: flex;
    align-items: center;
    height: 59px;
    padding-left: 43px;
}
.date-row input {
    width: 141px;
}
.drop {
    width: 15px;
    height: 22px;
    margin: 0 7px 0 4px;
    justify-content: center;
    border: 1px solid #c3c3c3;
    border-radius: 3px;
    background-color: #fff;
}
.drop::before {
    content: "";
    border: 4px solid transparent;
    border-top-color: #000;
    border-bottom: 0;
}
.cards {
    display: grid;
    grid-template-columns: 1fr 1fr;
    grid-auto-rows: 16px;
    padding: 11px 9px 11px 12px;
}
.cards a {
    display: flex;
    align-items: center;
    gap: 3px;
    overflow: hidden;
}

/* status bar */
.statusbar {
    display: flex;
    align-items: center;
    justify-content: space-between;
    height: 23px;
    flex: none;
    padding: 0 0 2px 5px;
    border-top: 1px solid #8f8f8f;
    background: linear-gradient(#dfe1e6, #dadce3 70%, #cfd1d6);
    font: bold 10px "Liberation Sans", sans-serif;
}
.grip {
    width: 12px;
    height: 12px;
    align-self: flex-end;
}
```
